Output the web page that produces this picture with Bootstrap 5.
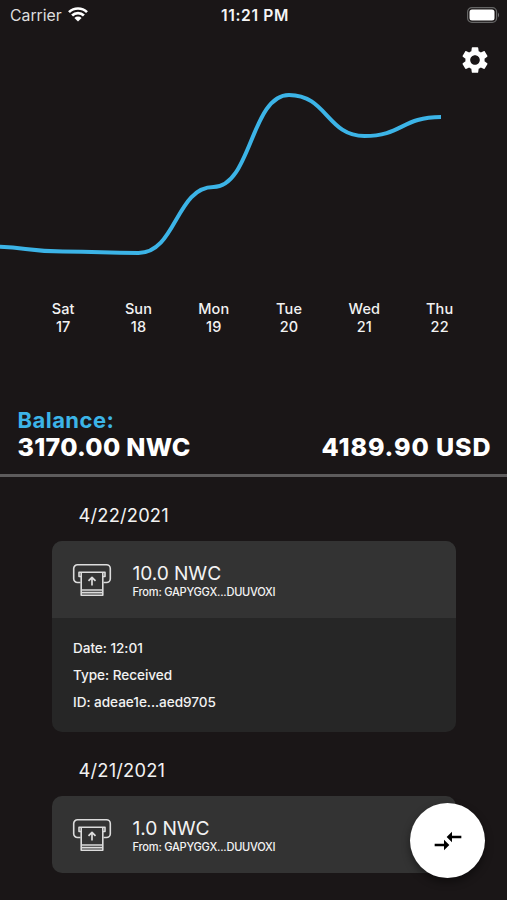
<!DOCTYPE html>
<html lang="en">
<head>
<meta charset="utf-8">
<meta name="viewport" content="width=device-width, initial-scale=1">
<title>Wallet</title>
<link href="https://cdn.jsdelivr.net/npm/bootstrap@5.3.0/dist/css/bootstrap.min.css" rel="stylesheet">
<style>
html{background:#1a1617}
body{background:#1a1617;color:#f2f2f2;font-family:Inter,"Liberation Sans",sans-serif;height:900px;overflow:hidden}
.status-bar{height:31px;font-size:15.8px;line-height:31px;padding:0 7px 0 10px;color:#dedede}
.status-side{width:110px}
.clock{font-weight:600;font-size:15.6px;letter-spacing:.65px;color:#f5f5f5}
.wifi{margin:-2px 0 0 6px}
.battery{margin-top:-2px}
.toolbar{height:43px;padding:13px 16.5px 0 0}
.chart{height:226px}
.chart svg{display:block}
.axis{height:105px;padding:0 30px 0 25.5px;font-size:14.5px;line-height:17.5px;letter-spacing:.1px;font-weight:450}
.axis div{width:75.3px;flex:none}
.balance{height:72px;padding:3px 16.5px 0 17.5px;font-weight:800;border-bottom:3px solid #5d5b5c;color:#fff}
.balance-label{font-size:22px;line-height:24px;color:#3cb4e7;font-weight:700;letter-spacing:.45px}
.amount{font-size:25px;line-height:30px;letter-spacing:.3px}
.amount-usd{letter-spacing:.9px;margin-right:-.9px}
.history{padding:0 51px 0 52px}
.day{font-size:18.3px;line-height:24px;padding:26px 0 0 26.500px;letter-spacing:.2px}
.tx{background:#262626;border-radius:10px;overflow:hidden;margin-top:14px}
.tx-head{background:#333;height:77px;padding:3.500px 0 0 20px}
.tx-title{font-size:19.2px;line-height:21px;letter-spacing:-.1px}
.tx-from{font-size:11.1px;line-height:16px;font-weight:500;letter-spacing:-.25px}
.tx-icon{width:40px;margin:-3px 20.5px 0 0}
.tx-body{height:114px;padding:17px 21px;font-size:13.6px;line-height:27px;font-weight:500;letter-spacing:-.05px}
.fab{position:absolute;left:410px;top:803px;width:75px;height:75px;box-shadow:0 4px 8px rgba(0,0,0,.45)}
</style>
<script src="https://cdn.jsdelivr.net/npm/bootstrap@5.3.0/dist/js/bootstrap.bundle.min.js"></script>
</head>
<body class="position-relative">
<svg width="0" height="0" class="d-none" aria-hidden="true">
  <symbol id="receive" viewBox="0 0 40 36">
    <g fill="none" stroke="#dcdcdc" stroke-width="1.6" stroke-linejoin="round">
      <path d="M8.500 20.500H5.500a3.800 3.800 0 0 1-3.800-3.800V6.500A3.800 3.800 0 0 1 5.500 2.700h29a3.800 3.800 0 0 1 3.800 3.800v10.200a3.800 3.800 0 0 1-3.800 3.800h-3"/>
      <path d="M9.200 14.500H7V10.200h26v4.300h-2.200M9.200 10.500v22.800h21.600V10.500M9.200 28h21.600M9.200 30.600h21.600"/>
      <path d="M20 23.500v-8M16.500 18.800l3.500-3.500 3.500 3.500" stroke-width="1.700"/>
    </g>
  </symbol>
</svg>

<header class="status-bar d-flex align-items-center justify-content-between">
  <div class="status-side d-flex align-items-center">
    <span>Carrier</span>
    <svg class="wifi" width="20" height="15" viewBox="0 0 20 15" fill="none" stroke="#fff" stroke-width="2.700">
      <path d="M1 5.100a13 13 0 0 1 18 0M4.100 8.500a8.400 8.400 0 0 1 11.800 0"/>
      <path d="M6.400 11a5.100 5.100 0 0 1 7.200 0L10 14.600z" fill="#fff" stroke="none"/>
    </svg>
  </div>
  <span class="clock">11:21 PM</span>
  <div class="status-side d-flex justify-content-end">
    <svg class="battery" width="33" height="16" viewBox="0 0 33 16">
      <rect x=".6" y=".6" width="29" height="14.800" rx="4.300" fill="none" stroke="#666" stroke-width="1.200"/>
      <rect x="2.500" y="2.500" width="25" height="11" rx="2.500" fill="#fff"/>
      <path d="M31 5.500q2 2.500 0 5z" fill="#777"/>
    </svg>
  </div>
</header>

<div class="toolbar d-flex justify-content-end">
  <svg width="32" height="32" viewBox="0 0 24 24" fill="#fff"><path d="M19.140 12.940c.040-.300.060-.610.060-.940 0-.320-.020-.640-.070-.940l2.030-1.580c.180-.140.230-.410.120-.610l-1.920-3.320c-.120-.220-.370-.290-.590-.220l-2.390.960c-.500-.380-1.030-.700-1.620-.940l-.360-2.540c-.040-.240-.240-.410-.480-.410h-3.840c-.240 0-.430.170-.470.410l-.360 2.540c-.590.240-1.130.570-1.620.940l-2.390-.960c-.220-.080-.470 0-.590.220L2.740 8.870c-.120.210-.080.470.120.610l2.030 1.580c-.050.300-.090.630-.090.940s.020.640.070.940l-2.030 1.580c-.180.140-.230.410-.120.610l1.920 3.320c.120.220.370.290.590.220l2.390-.960c.500.380 1.030.700 1.620.940l.360 2.540c.050.240.240.410.480.410h3.840c.240 0 .440-.170.470-.410l.360-2.540c.590-.240 1.130-.560 1.620-.940l2.390.960c.220.080.470 0 .590-.220l1.920-3.320c.120-.220.070-.470-.120-.610l-2.010-1.580zM12 15.600c-1.980 0-3.600-1.620-3.600-3.600s1.620-3.600 3.600-3.600 3.600 1.620 3.600 3.600-1.620 3.600-3.600 3.600z"/></svg>
</div>

<div class="chart">
  <svg width="507" height="226" viewBox="0 74 507 226" fill="none" stroke="#3cb4e7" stroke-width="4">
    <path d="M-12 246.500C25.500 246.500 25.500 251.500 63 251.500C101 251.500 101 253 138.500 253C176 253 176 187 213.500 187C251 187 251 95 289 95C327 95 327 136 364.500 136C402 136 402 117 441 117"/>
  </svg>
</div>

<div class="axis d-flex text-center">
  <div>Sat<br>17</div><div>Sun<br>18</div><div>Mon<br>19</div><div>Tue<br>20</div><div>Wed<br>21</div><div>Thu<br>22</div>
</div>

<section class="balance">
  <div class="balance-label">Balance:</div>
  <div class="amount d-flex justify-content-between"><span>3170.00 NWC</span><span class="amount-usd">4189.90 USD</span></div>
</section>

<main class="history">
  <div class="day">4/22/2021</div>
  <article class="tx">
    <div class="tx-head d-flex align-items-center">
      <svg class="tx-icon" height="36"><use href="#receive"/></svg>
      <div><div class="tx-title">10.0 NWC</div><div class="tx-from">From: GAPYGGX...DUUVOXI</div></div>
    </div>
    <div class="tx-body"><div>Date: 12:01</div><div>Type: Received</div><div>ID: adeae1e...aed9705</div></div>
  </article>
  <div class="day">4/21/2021</div>
  <article class="tx">
    <div class="tx-head d-flex align-items-center">
      <svg class="tx-icon" height="36"><use href="#receive"/></svg>
      <div><div class="tx-title">1.0 NWC</div><div class="tx-from">From: GAPYGGX...DUUVOXI</div></div>
    </div>
  </article>
</main>

<button class="fab btn p-0 bg-white rounded-circle border-0 d-flex align-items-center justify-content-center" aria-label="Transfer">
  <svg width="32" height="32" viewBox="0 0 24 24" fill="#000"><path d="M9.010 14H2v2h7.010v3L13 15l-3.990-4v3zm5.980-1v-3H22V8h-7.010V5L11 9l3.990 4z"/></svg>
</button>
</body>
</html>
